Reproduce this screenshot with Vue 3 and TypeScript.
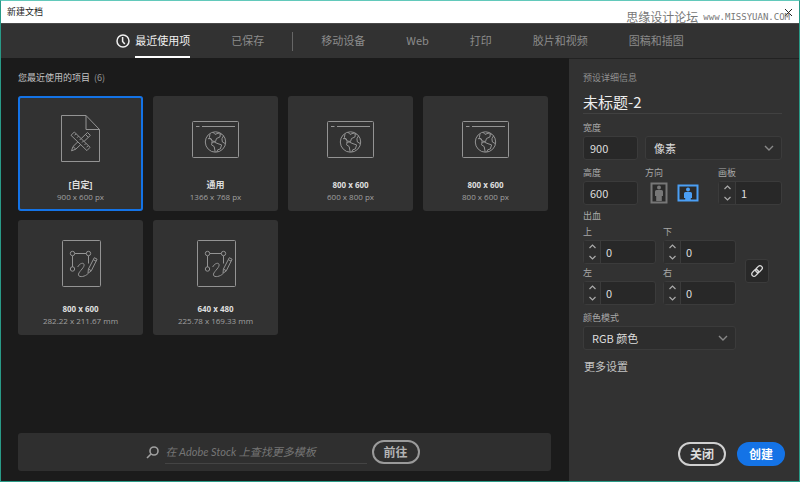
<script setup lang="ts">
import { reactive, ref } from 'vue'

type IconKind = 'doc' | 'web' | 'art'
type StepKey = 'top' | 'bottom' | 'left' | 'right'

interface Preset {
  name: string
  size: string
  icon: IconKind
}

const categories = ['移动设备', 'Web', '打印', '胶片和视频', '图稿和插图']
const activeTab = ref('最近使用项')

const presets: Preset[] = [
  { name: '[自定]', size: '900 x 600 px', icon: 'doc' },
  { name: '通用', size: '1366 x 768 px', icon: 'web' },
  { name: '800 x 600', size: '600 x 800 px', icon: 'web' },
  { name: '800 x 600', size: '800 x 600 px', icon: 'web' },
  { name: '800 x 600', size: '282.22 x 211.67 mm', icon: 'art' },
  { name: '640 x 480', size: '225.78 x 169.33 mm', icon: 'art' },
]
const selected = ref(0)

const docName = ref('未标题-2')
const width = ref('900')
const height = ref('600')
const unit = ref('像素')
const colorMode = ref('RGB 颜色')
const landscape = ref(true)
const artboards = ref(1)
const linked = ref(true)
const query = ref('')

const bleed = reactive<Record<StepKey, number>>({ top: 0, bottom: 0, left: 0, right: 0 })
const bleedFields: { key: StepKey; label: string }[] = [
  { key: 'top', label: '上' },
  { key: 'bottom', label: '下' },
  { key: 'left', label: '左' },
  { key: 'right', label: '右' },
]

// CJK names are set one size larger than numeric ones
function isCjk(text: string) {
  return /[\u4e00-\u9fff]/.test(text)
}

function stepBleed(key: StepKey, delta: number) {
  const value = Math.max(0, bleed[key] + delta)
  if (linked.value) {
    bleedFields.forEach((f) => (bleed[f.key] = value))
  } else {
    bleed[key] = value
  }
}
</script>

<template>
  <div class="window">
    <header class="titlebar">
      <h1>新建文档</h1>
      <button class="close" type="button" aria-label="关闭窗口">
        <svg width="9" height="9" viewBox="0 0 9 9"><path d="M1 1l7 7M8 1l-7 7" /></svg>
      </button>
      <div class="watermark"><span>思缘设计论坛</span><span class="site">www.MISSYUAN.COM</span></div>
    </header>

    <nav class="tabs">
      <button type="button" class="tab recent" :class="{ active: activeTab === '最近使用项' }" @click="activeTab = '最近使用项'">
        <svg width="14" height="14" viewBox="0 0 14 14"><circle cx="7" cy="7" r="6" /><path d="M6.6 3v4.4l2.2 2.6" /></svg>
        <span>最近使用项</span>
      </button>
      <button type="button" class="tab" :class="{ active: activeTab === '已保存' }" @click="activeTab = '已保存'"><span>已保存</span></button>
      <i class="divider"></i>
      <button v-for="c in categories" :key="c" type="button" class="tab" :class="{ active: activeTab === c }" @click="activeTab = c">
        <span>{{ c }}</span>
      </button>
    </nav>

    <div class="body">
      <main class="main">
        <h2>您最近使用的项目 <span>(6)</span></h2>
        <div class="cards">
          <button v-for="(p, i) in presets" :key="i" type="button" class="card" :class="{ selected: selected === i }" @click="selected = i">
            <svg width="49" height="48" viewBox="0 0 49 48">
              <g v-if="p.icon === 'doc'">
                <path d="M5.5 .5H30L43.5 14.5V46.5H5.5zM30 .5V14.5H43.5" />
                <path d="M31.5 17.5l2.9 2.9-14.6 13.8-4.3 1.6 1.5-4.3zM29.5 19.5l2.8 2.8M17 31.5l2.8 2.7" />
                <path class="cover" d="M18.3 17l15.8 15.3-3.2 3.3L15 20.3z" />
                <path d="M20 18.8l-1.4 1.5M22.5 21.2l-1.4 1.5M25 23.6l-1.4 1.5M27.5 26l-1.4 1.5M30 28.4l-1.4 1.5M32 30.8l-1.4 1.5" />
              </g>
              <g v-else-if="p.icon === 'web'">
                <rect x="1.5" y="6.5" width="46" height="36" rx="1" />
                <path d="M5 11.500h3.500M11 11.500h33" />
                <circle cx="24.5" cy="27" r="10.2" />
                <path d="M22 17.2l2 2.2 3.2-1.2 2.2 1.2-.5 2.6-3.4 1.5-1 3-3.2-.4-1.3-2.6-3 .2M19 19.2l-.6 3.2 2.4 3.2M20.2 27l3.1.1 3.7 1.6 3.6 1.2-1.2 4-2.7.9-.9 2.2M21.3 27l-.8 2.8 2.7 1.8 1 5.4M32.6 20.7l-1.7 3.1.5 3.2 3.1 1.7M28.7 18l1.8 1.5" />
              </g>
              <g v-else>
                <rect x="6.5" y="1.5" width="38" height="46" rx="1" />
                <path d="M18.8 14.5h11.4M16.5 17v11M32.5 17v7.5" />
                <circle cx="16.5" cy="14.5" r="2.2" /><circle cx="32.5" cy="14.5" r="2.2" /><circle cx="16.5" cy="30" r="2.2" />
                <path d="M21.7 28c1.8-3.8 6.5-5.2 6.4-1.8-.1 3-6.5 7.3-5.6 10 1 2.6 6.8 1.3 9.4-1.5" />
                <path d="M38.3 18.7l2.8 1.5-5.8 11.6-3.3 2.5.4-4.2zM32.4 30l2.9 1.8M37.5 20.8l2.7 1.4" />
              </g>
            </svg>
            <strong :class="{ cjk: isCjk(p.name) }">{{ p.name }}</strong>
            <span>{{ p.size }}</span>
          </button>
        </div>

        <form class="search" @submit.prevent>
          <svg width="13" height="13" viewBox="0 0 13 13"><circle cx="8" cy="5" r="4" /><path d="M5 8L1 12" /></svg>
          <input v-model="query" type="text" aria-label="搜索模板" placeholder="在 Adobe Stock 上查找更多模板" />
          <button type="submit" class="pill">前往</button>
        </form>
      </main>

      <aside class="details">
        <label class="caption" for="doc-name">预设详细信息</label>
        <input id="doc-name" v-model="docName" class="doc-name" type="text" />

        <div class="row">
          <div class="field short">
            <label for="width">宽度</label>
            <input id="width" v-model="width" class="box" type="text" />
          </div>
          <div class="field grow">
            <div class="select">
              <select v-model="unit" aria-label="单位"><option>像素</option><option>英寸</option><option>毫米</option></select>
              <svg width="10" height="6" viewBox="0 0 10 6"><path d="M1 1l4 4 4-4" /></svg>
            </div>
          </div>
        </div>

        <div class="row">
          <div class="field short">
            <label for="height">高度</label>
            <input id="height" v-model="height" class="box" type="text" />
          </div>
          <div class="field grow" role="group" aria-labelledby="direction">
            <span id="direction" class="label">方向</span>
            <div class="orient">
              <button type="button" aria-label="纵向" :aria-pressed="!landscape" @click="landscape = false">
                <svg width="18" height="22" viewBox="0 0 18 22">
                  <rect class="frame" x="1.5" y="1.5" width="15" height="19" />
                  <circle cx="9" cy="5.5" r="2" /><path d="M6.5 8h5Q13 8 13 9.5V14h-1.2v5H6.2v-5H5V9.5Q5 8 6.5 8z" />
                </svg>
              </button>
              <button type="button" aria-label="横向" :aria-pressed="landscape" @click="landscape = true">
                <svg width="22" height="18" viewBox="0 0 22 18">
                  <rect class="frame" x="1.5" y="1.5" width="19" height="15" />
                  <circle cx="11" cy="5.5" r="2" /><path d="M8.500 8h5Q15 8 15 9.500V14h-1.200v2H8.200v-2H7V9.500Q7 8 8.500 8z" />
                </svg>
              </button>
            </div>
          </div>
          <div class="field board">
            <label for="boards">画板</label>
            <div class="stepper">
              <span class="arrows">
                <button type="button" aria-label="增加画板" @click="artboards++"><svg width="7" height="5" viewBox="0 0 7 5"><path d="M.5 4l3-3 3 3" /></svg></button>
                <button type="button" aria-label="减少画板" @click="artboards = Math.max(1, artboards - 1)"><svg width="7" height="5" viewBox="0 0 7 5"><path d="M.5 1l3 3 3-3" /></svg></button>
              </span>
              <input id="boards" v-model.number="artboards" type="text" />
            </div>
          </div>
        </div>

        <span class="label section">出血</span>
        <div class="bleed">
          <div class="bleed-grid">
            <div v-for="f in bleedFields" :key="f.key" class="field">
              <label :for="'bleed-' + f.key">{{ f.label }}</label>
              <div class="stepper">
                <span class="arrows">
                  <button type="button" :aria-label="f.label + '增加'" @click="stepBleed(f.key, 1)"><svg width="7" height="5" viewBox="0 0 7 5"><path d="M.5 4l3-3 3 3" /></svg></button>
                  <button type="button" :aria-label="f.label + '减少'" @click="stepBleed(f.key, -1)"><svg width="7" height="5" viewBox="0 0 7 5"><path d="M.5 1l3 3 3-3" /></svg></button>
                </span>
                <input :id="'bleed-' + f.key" v-model.number="bleed[f.key]" type="text" />
              </div>
            </div>
          </div>
          <button type="button" class="link" aria-label="链接出血值" :aria-pressed="linked" @click="linked = !linked">
            <svg width="12" height="12" viewBox="0 0 12 12">
              <g transform="rotate(-45 6 6)">
                <rect x="-.5" y="3.7" width="7.5" height="4.6" rx="2.3" /><rect x="5" y="3.7" width="7.5" height="4.6" rx="2.3" />
              </g>
            </svg>
          </button>
        </div>

        <div class="field mode">
          <label for="mode">颜色模式</label>
          <div class="select">
            <select id="mode" v-model="colorMode"><option>RGB 颜色</option><option>CMYK 颜色</option></select>
            <svg width="10" height="6" viewBox="0 0 10 6"><path d="M1 1l4 4 4-4" /></svg>
          </div>
        </div>

        <button type="button" class="more">更多设置</button>

        <footer class="actions">
          <button type="button" class="pill light">关闭</button>
          <button type="button" class="pill primary">创建</button>
        </footer>
      </aside>
    </div>
  </div>
</template>

<style>
body {
  background: #1b1b1b;
}
</style>

<style scoped>
* {
  box-sizing: border-box;
}
.window {
  display: flex;
  flex-direction: column;
  min-height: 100vh;
  border: 1px solid #299a87;
  border-top-color: #62c9bb;
  background: #1b1b1b;
  color: #a8a8a8;
  font: 9px/12px "Noto Sans CJK SC", sans-serif;
}
button,
input,
select {
  margin: 0;
  padding: 0;
  border: 0;
  outline: 0;
  background: none;
  color: inherit;
  font: inherit;
}
svg {
  display: block;
  flex: none;
  fill: none;
  stroke: currentColor;
}
h1,
h2 {
  margin: 0;
  font: inherit;
}

.titlebar {
  position: relative;
  display: flex;
  justify-content: space-between;
  align-items: center;
  height: 22px;
  padding: 0 6px;
  background: #fff;
  color: #222;
}
.watermark {
  position: absolute;
  right: 9px;
  bottom: -2px;
  display: flex;
  align-items: center;
  gap: 5px;
  color: #777;
  font-size: 12px;
  line-height: 16px;
}
.site {
  font: 9px/16px "DejaVu Sans Mono", monospace;
}

.tabs {
  display: flex;
  justify-content: center;
  gap: 41px;
  height: 35px;
  border-top: 1px solid #4a4a4a;
  background: #323232;
  color: #8c8c8c;
  font-size: 11px;
}
.tab {
  display: flex;
  align-items: center;
  gap: 5px;
}
.tab span {
  display: flex;
  align-items: center;
  height: 100%;
  border-bottom: 2px solid transparent;
}
.tab svg {
  stroke-width: 1.5;
}
.tab.active {
  color: #f0f0f0;
}
.tab.active span {
  border-color: #fff;
}
.divider {
  width: 1px;
  height: 19px;
  margin: 8px -13px;
  background: #666;
}

.body {
  display: flex;
  flex: 1;
}
.main {
  display: flex;
  flex: 1;
  flex-direction: column;
  min-width: 0;
  padding: 14px 18px 10px 17px;
}
h2 {
  color: #c4c4c4;
}
h2 span {
  margin-left: 2px;
  color: #999;
}
.cards {
  display: grid;
  grid-template-columns: repeat(auto-fill, 125px);
  gap: 9px 10px;
  margin: 12px 0;
}
.card {
  display: flex;
  flex-direction: column;
  align-items: center;
  height: 115px;
  padding-top: 19px;
  border-radius: 3px;
  background: #323232;
  color: #a0a0a0;
  font: 8px/12px "Open Sans", "Noto Sans CJK SC", sans-serif;
}
.card.selected {
  box-shadow: inset 0 0 0 2px #1473e6;
}
.card svg {
  margin-bottom: 16px;
  color: #949494;
}
.card .cover {
  fill: #323232;
}
.card strong {
  color: #dedede;
  font-weight: 700;
}
.card .cjk {
  font-size: 9px;
}
.search {
  display: flex;
  justify-content: center;
  align-items: center;
  height: 38px;
  margin-top: auto;
  padding: 0 22px 0 18px;
  border-radius: 3px;
  background: #2f2f2f;
}
.search svg {
  margin-right: 6px;
  color: #a0a0a0;
  stroke-width: 1.6;
}
.search input {
  width: 202px;
  height: 24px;
  margin-right: 5px;
  padding-left: 1px;
  border-bottom: 1px solid #444;
  color: #aaa;
  font: italic 11px "Lato", "Noto Sans CJK SC", sans-serif;
}
.search input::placeholder {
  color: #757575;
}
.pill {
  width: 48px;
  height: 24px;
  border: 2px solid #9a9a9a;
  border-radius: 12px;
  color: #b4b4b4;
  font-size: 12px;
  font-weight: 700;
  line-height: 18px;
}
.pill.light {
  border-color: #d0d0d0;
  color: #ddd;
}
.pill.primary {
  border-color: #1473e6;
  background: #1473e6;
  color: #fff;
}

.details {
  display: flex;
  flex-direction: column;
  width: 230px;
  padding: 13px 14px 15px;
  border-top: 1px solid #222;
  background: #323232;
}
.doc-name {
  width: 199px;
  height: 24px;
  margin-top: 6px;
  border-bottom: 1px solid #414141;
  color: #eee;
  font-size: 15px;
  line-height: 18px;
}
.caption {
  color: #909090;
}
.row {
  display: flex;
  align-items: flex-end;
  gap: 7px;
  width: 199px;
  margin-top: 8px;
}
.row + .row {
  margin-top: 7px;
}
.field {
  display: flex;
  flex-direction: column;
  gap: 2px;
  min-width: 0;
}
.short {
  width: 55px;
}
.grow {
  flex: 1;
}
.board {
  width: 64px;
}
.box,
.select,
.stepper {
  width: 100%;
  height: 24px;
  border: 1px solid #3b3b3b;
  border-radius: 3px;
  background: #282828;
  color: #dedede;
  font-size: 11px;
}
.box {
  padding-left: 6px;
}
.select {
  display: flex;
  align-items: center;
  background: #2d2d2d;
}
.select select {
  flex: 1;
  height: 22px;
  padding-left: 8px;
  margin-right: -18px;
  appearance: none;
}
.select svg {
  margin-right: 7px;
  color: #888;
  stroke-width: 1.4;
  pointer-events: none;
}
.orient {
  display: flex;
  align-items: center;
  gap: 9px;
  height: 24px;
  padding-left: 5px;
}
.orient button {
  color: #777;
}
.orient button[aria-pressed="true"] {
  color: #4b9ff5;
}
.orient svg {
  fill: currentColor;
  stroke: none;
}
.orient .frame {
  fill: #2a2a2a;
  stroke: currentColor;
  stroke-width: 2;
}
.stepper {
  display: flex;
}
.stepper input {
  flex: 1;
  width: 0;
  padding-left: 5px;
}
.arrows {
  display: flex;
  flex-direction: column;
  width: 17px;
  border-right: 1px solid #3b3b3b;
  background: #2d2d2d;
  color: #aaa;
}
.arrows button {
  display: grid;
  flex: 1;
  place-items: center;
}
.arrows svg {
  stroke-width: 1.2;
}
.section {
  margin-top: 5px;
}
.bleed {
  display: flex;
  align-items: center;
  gap: 9px;
  margin-top: 4px;
}
.bleed-grid {
  display: grid;
  grid-template-columns: 73px 73px;
  gap: 3px 7px;
}
.link {
  display: grid;
  place-items: center;
  width: 24px;
  height: 24px;
  margin-top: 10px;
  border: 1px solid #3b3b3b;
  border-radius: 3px;
  background: #282828;
  color: #ddd;
}
.link svg {
  overflow: visible;
  stroke-width: 1.3;
}
.mode {
  width: 153px;
  margin-top: 7px;
}
.more {
  align-self: flex-start;
  margin: 8px 0 0 1px;
  color: #c4c4c4;
  font-size: 11px;
  line-height: 16px;
}
.actions {
  display: flex;
  justify-content: flex-end;
  gap: 11px;
  margin-top: auto;
}
</style>
